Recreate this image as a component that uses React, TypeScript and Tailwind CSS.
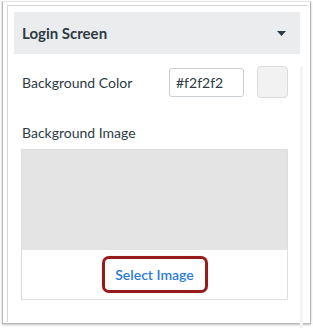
export default function App() {
  return (
    <div className="w-[313px] h-[329px] bg-white pt-[1px] pl-[2px] font-['Lato','Noto_Sans',sans-serif] text-[#2d3b45]">
      <div className="w-[309px] h-[323px] border border-[#b8b8b8] border-t-[#e6e6e6] shadow-[0_1px_2px_rgba(0,0,0,0.25)] pl-[4px] pt-[3px]">
        <div className="w-[300px] h-[317px] border-l border-t border-[#d4d4d4] pl-[6px] pt-[6px]">
          {/* Panel header */}
          <div className="w-[286px] h-[42px] bg-[#ebeced] flex items-center justify-between pl-[8px] pr-[14px]">
            <span className="text-[15px] font-bold">Login Screen</span>
            <svg width="9" height="5" viewBox="0 0 9 5">
              <path d="M0 0h9L4.5 5z" fill="#2d3b45" />
            </svg>
          </div>

          {/* Panel body */}
          <div className="w-[289px] h-[262px] border-r-[3px] border-[#f4f4f4] pl-[7px]">
            <div className="flex items-center h-[32px] mt-[12px]">
              <span className="ml-[1px] w-[147px] text-[14px]">Background Color</span>
              <div className="w-[75px] h-[29px] border border-[#c7cdd1] rounded-[3px] flex items-center pl-[6px] text-[14px]">
                #f2f2f2
              </div>
              <div className="ml-[13px] w-[31px] h-[32px] rounded-[4px] bg-[#f2f2f2] border border-[#dcdcdc]" />
            </div>

            <div className="ml-[1px] mt-[25px] text-[14px] leading-[20px]">Background Image</div>

            <div className="mt-[6px] w-[267px] border border-[#dedede]">
              <div className="h-[100px] bg-[#e4e4e4]" />
              <div className="flex justify-center pt-[6px] pb-[6px]">
                <div className="w-[106px] h-[37px] rounded-[7px] border-[3px] border-[#971a1d] shadow-[0_0_1px_rgba(0,0,0,0.4)] flex items-center justify-center">
                  <span className="text-[14px] font-semibold text-[#2b7bd6]">Select Image</span>
                </div>
              </div>
            </div>
          </div>
        </div>
      </div>
    </div>
  );
}
